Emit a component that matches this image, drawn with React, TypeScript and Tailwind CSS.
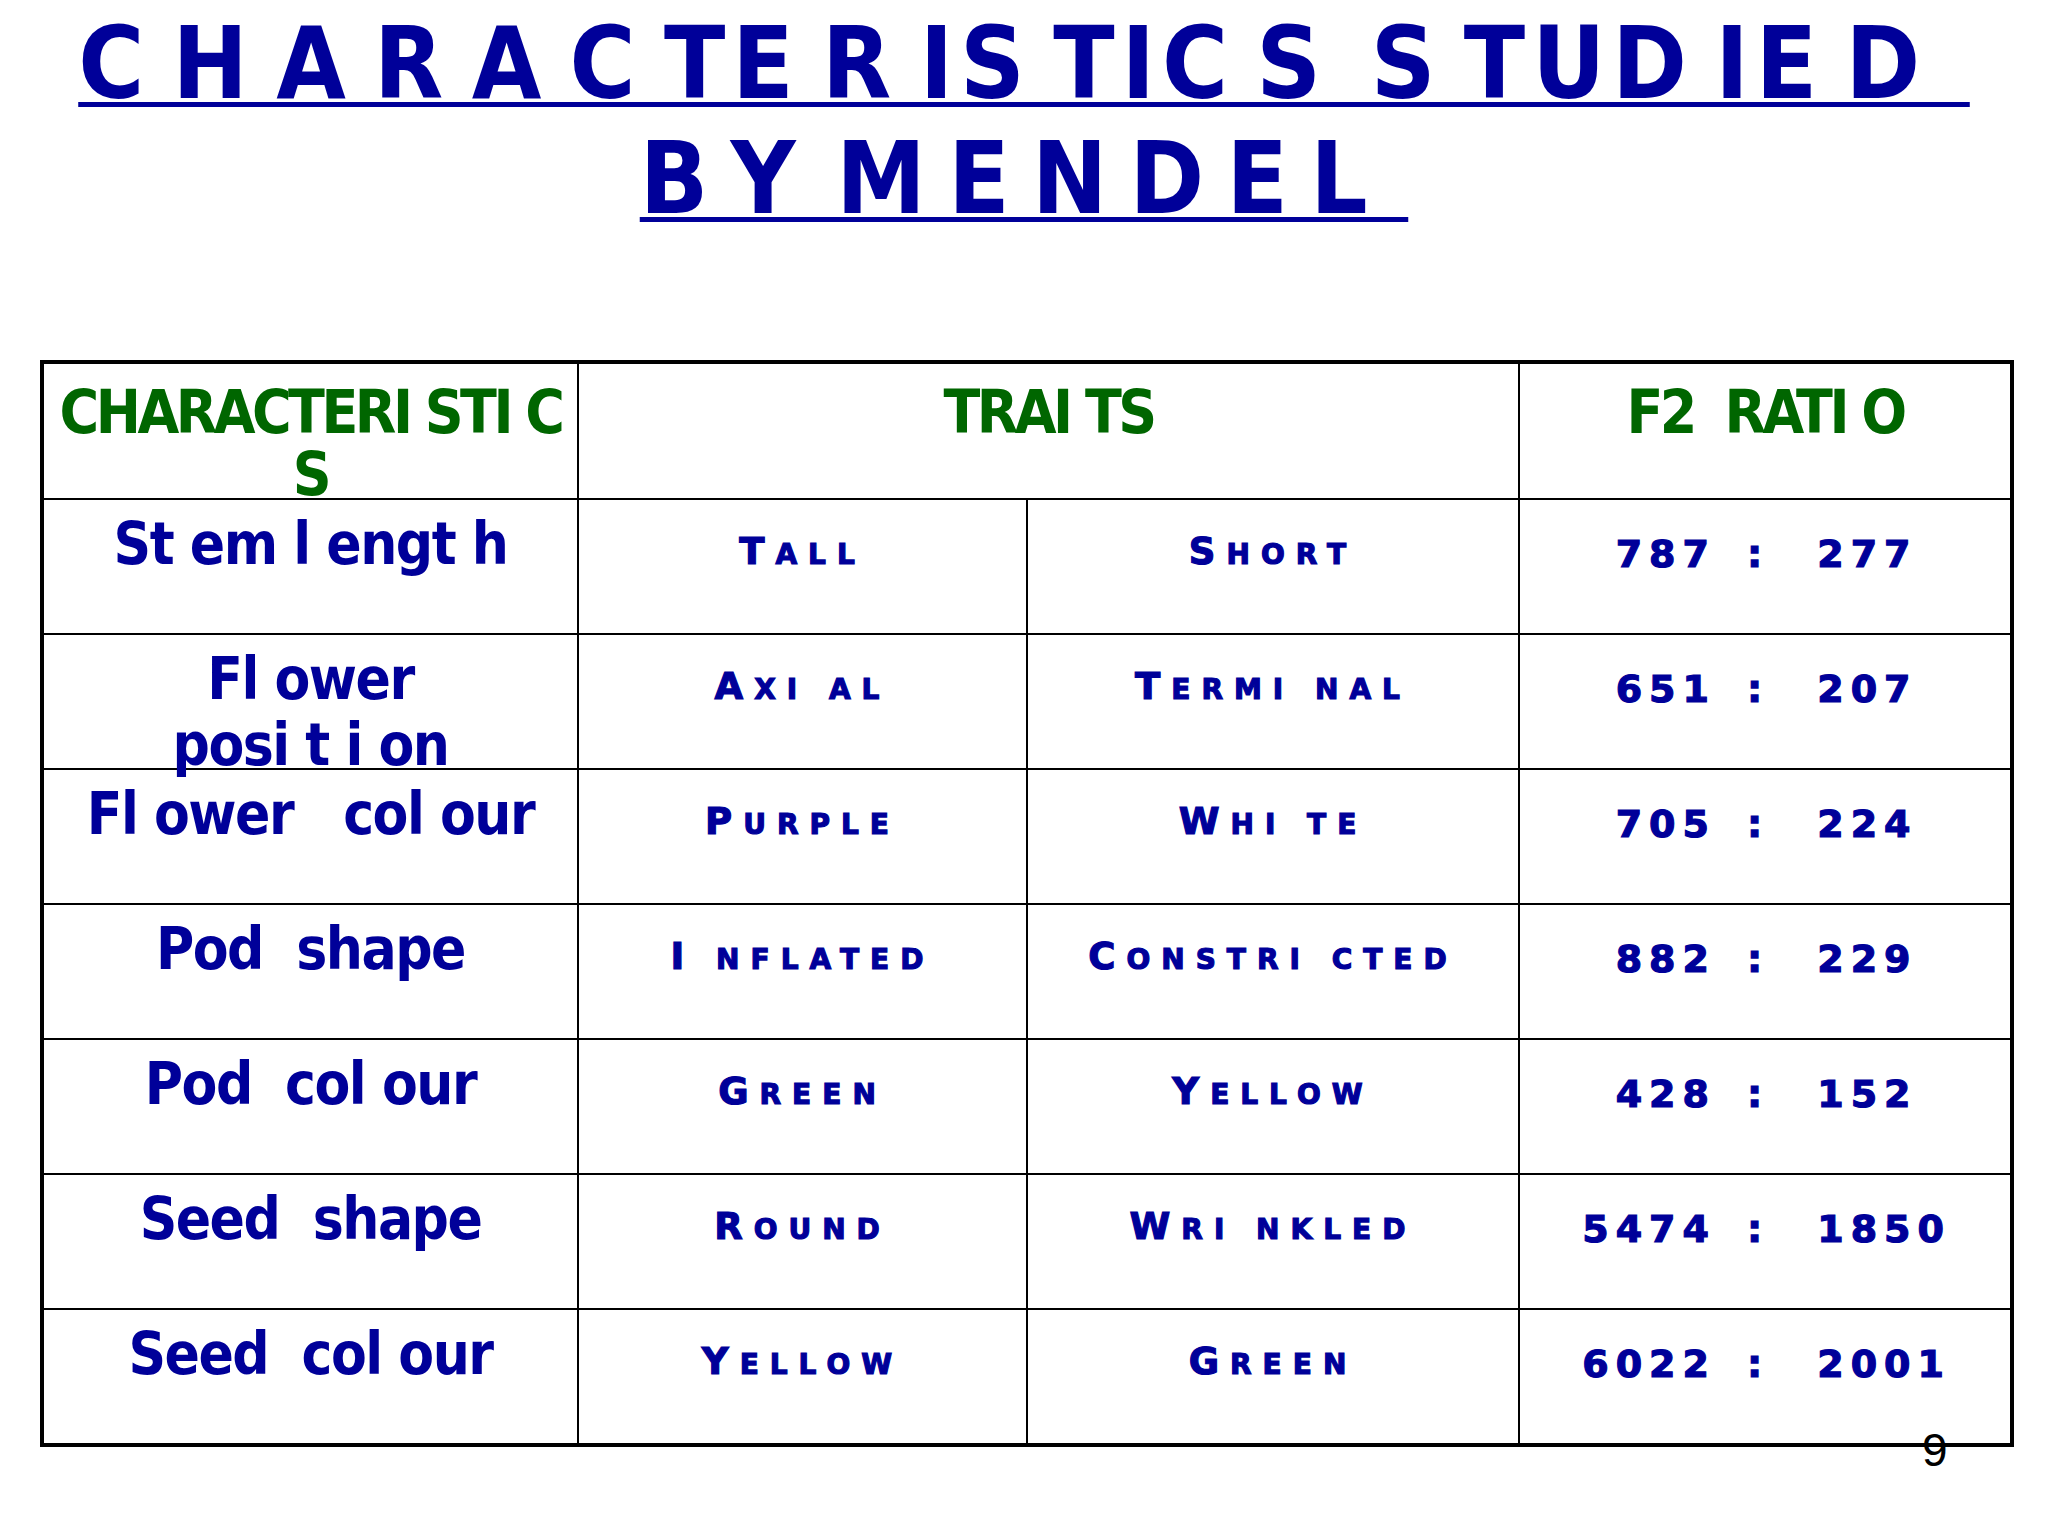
import React from "react";

/**
 * App.tsx — slide: characteristics studied by Mendel (table of traits and F2 ratios).
 */

const narrow = "[font-family:'Liberation_Sans_Narrow','DejaVu_Sans_Condensed','Liberation_Sans',sans-serif]";
const wide = "[font-family:'DejaVu_Sans','Verdana',sans-serif]";

interface Row {
  name: string[];
  a: string;
  b: string;
  left: string;
  right: string;
}

const rows: Row[] = [
  { name: ["St em l engt h"], a: "Tall", b: "Short", left: "787", right: "277" },
  { name: ["Fl ower", "posi t i on"], a: "Axi al", b: "Termi nal", left: "651", right: "207" },
  { name: ["Fl ower   col our"], a: "Purple", b: "Whi te", left: "705", right: "224" },
  { name: ["Pod  shape"], a: "I nflated", b: "Constri cted", left: "882", right: "229" },
  { name: ["Pod  col our"], a: "Green", b: "Yellow", left: "428", right: "152" },
  { name: ["Seed  shape"], a: "Round", b: "Wri nkled", left: "5474", right: "1850" },
  { name: ["Seed  col our"], a: "Yellow", b: "Green", left: "6022", right: "2001" },
];

// first letter as a capital, the rest as small caps
function SmallCaps({ text }: { text: string }) {
  return (
    <span
      className={`${wide} whitespace-pre text-[37px] font-bold uppercase leading-[66px] tracking-[11px] text-[#000099] [-webkit-text-stroke:1.2px_#000099]`}
    >
      {text.charAt(0)}
      <span className="text-[28px]">{text.slice(1)}</span>
    </span>
  );
}

function Ratio({ left, right }: { left: string; right: string }) {
  return (
    <div
      className={`${wide} flex pt-[21px] text-[38px] font-bold leading-[66px] tracking-[7px] text-[#000099] [-webkit-text-stroke:1.2px_#000099]`}
    >
      <span className="w-[196px] text-right">{left}</span>
      <span className="ml-[31px]">:</span>
      <span className="ml-[48px]">{right}</span>
    </div>
  );
}

export default function App() {
  return (
    <div className="relative h-[1536px] w-[2048px] overflow-hidden bg-white">
      <div
        className={`${narrow} pt-[6px] text-center text-[100px] font-bold leading-[115px] text-[#000099] [word-spacing:-17px]`}
      >
        <div className="tracking-[7px]">
          <span className="whitespace-pre underline decoration-[5px] underline-offset-[4px]">
            {"C H A R A C TE R IS TIC S  S TUD IE D \u00a0"}
          </span>
        </div>
        <div className="tracking-[4px]">
          <span className="whitespace-pre underline decoration-[5px] underline-offset-[4px]">{"B Y  M E N D E L \u00a0"}</span>
        </div>
      </div>

      <div className="ml-[40px] mt-[124px] w-[1974px] border-4 border-black">
        <div className="grid h-[134px] grid-cols-[533px_941px_1fr] text-[#006600]">
          <div className={`${narrow} pt-[17px] text-center text-[60px] font-bold leading-[62px] tracking-[-3.5px]`}>
            <div className="whitespace-pre">CHARACTERI STI C</div>
            <div>S</div>
          </div>
          <div className={`${narrow} whitespace-pre border-l-2 border-black pt-[17px] text-center text-[60px] font-bold leading-[62px] tracking-[-3.5px]`}>
            TRAI TS
          </div>
          <div className={`${narrow} whitespace-pre border-l-2 border-black pt-[17px] text-center text-[60px] font-bold leading-[62px] tracking-[-3.5px]`}>
            {"F2  RATI O"}
          </div>
        </div>

        {rows.map((r) => (
          <div key={r.left} className="grid h-[135px] grid-cols-[533px_449px_492px_1fr] border-t-2 border-black">
            <div className={`${narrow} relative z-10 pt-[11px] text-center text-[58px] font-bold leading-[66px] tracking-[-1.5px] text-[#000099]`}>
              {r.name.map((line) => (
                <div key={line} className="whitespace-pre">
                  {line}
                </div>
              ))}
            </div>
            <div className="border-l-2 border-black pt-[19px] text-center">
              <SmallCaps text={r.a} />
            </div>
            <div className="border-l-2 border-black pt-[19px] text-center">
              <SmallCaps text={r.b} />
            </div>
            <div className="border-l-2 border-black">
              <Ratio left={r.left} right={r.right} />
            </div>
          </div>
        ))}
      </div>

      <span className="absolute left-[1922px] top-[1427px] font-['Liberation_Sans',sans-serif] text-[46px] leading-none text-black">
        9
      </span>
    </div>
  );
}
